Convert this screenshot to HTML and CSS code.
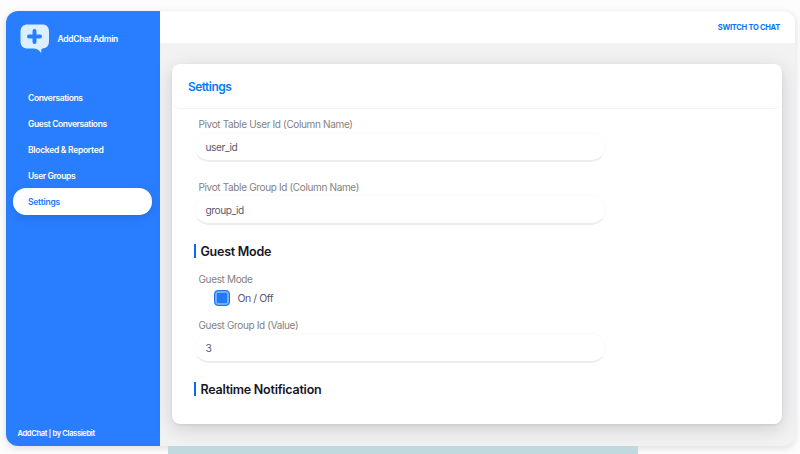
FILE: index.html
```html
<!DOCTYPE html>
<html lang="en">
<head>
<meta charset="utf-8">
<title>AddChat Admin</title>
<link rel="stylesheet" href="styles.css">
</head>
<body>
<div class="app">
  <aside class="sidebar">
    <div class="brand">
      <svg class="logo" width="30" height="30" viewBox="0 0 30 30">
        <path d="M8 .5h14c5 0 7 2.500 7 7.500v9c0 4-1.500 6-4 7-1.500.6-3.500.5-3.700 1.500l-.1 3.500c-1.500-2-3.700-4.500-7.200-4.500H8c-5 0-7.500-2.500-7.500-7.500V8C.5 3 3 .5 8 .5z" fill="#daefff"/>
        <path d="M14.500 7v11M9 12.500h11" stroke="#297eff" stroke-width="4" stroke-linecap="round"/>
      </svg>
      <span>AddChat Admin</span>
    </div>
    <nav class="nav">
      <a>Conversations</a>
      <a>Guest Conversations</a>
      <a>Blocked &amp; Reported</a>
      <a>User Groups</a>
      <a class="active">Settings</a>
    </nav>
    <footer class="credit">AddChat | by Classiebit</footer>
  </aside>
  <main class="main">
    <header class="topbar"><a>SWITCH TO CHAT</a></header>
    <section class="card">
      <h1 class="card-title">Settings</h1>
      <div class="card-body">
        <div class="field">
          <label>Pivot Table User Id (Column Name)</label>
          <div class="input">user_id</div>
        </div>
        <div class="field">
          <label>Pivot Table Group Id (Column Name)</label>
          <div class="input">group_id</div>
        </div>
        <h2>Guest Mode</h2>
        <div class="toggle">
          <label>Guest Mode</label>
          <div class="option"><span class="box"></span><span>On / Off</span></div>
        </div>
        <div class="field last">
          <label>Guest Group Id (Value)</label>
          <div class="input">3</div>
        </div>
        <h2>Realtime Notification</h2>
      </div>
    </section>
  </main>
</div>
<div class="strip"></div>
</body>
</html>
```
FILE: styles.css
```css
* { box-sizing: border-box; }
body {
  margin: 0;
  height: 454px;
  overflow: hidden;
  padding: 11px 5px 0 5.500px;
  background: #fdfdfd;
  font-family: Inter, "Liberation Sans", sans-serif;
}
.app {
  display: flex;
  height: 435px;
  border-radius: 12px;
  overflow: hidden;
  background: #f2f2f3;
  box-shadow: 0 2px 7px 1px rgba(0, 0, 0, .11);
}
.sidebar {
  width: 154px;
  flex: none;
  display: flex;
  flex-direction: column;
  background: #297eff;
  color: #fff;
  font-size: 8.500px;
  font-weight: 600;
}
.brand {
  display: flex;
  align-items: center;
  height: 34px;
  margin: 11px 0 0 14.500px;
  gap: 7.500px;
  letter-spacing: -.32px;
}
.logo { margin-top: -1px; }
.nav {
  margin: 28px 7.500px 0;
  display: flex;
  flex-direction: column;
}
.nav a {
  height: 26px;
  line-height: 28.500px;
  padding-left: 15px;
  border-radius: 13px;
  letter-spacing: -.38px;
}
.nav a:nth-child(3) { letter-spacing: -.28px; }
.nav .active {
  height: 27px;
  background: #fff;
  color: #1677ff;
  letter-spacing: -.22px;
  box-shadow: 0 3px 9px rgba(0, 40, 120, .18);
}
.credit {
  margin: auto 0 6px 12px;
  font-size: 7.500px;
  line-height: 12px;
  letter-spacing: -.33px;
}
.main { flex: 1; }
.topbar {
  height: 32px;
  padding: 0 15px 0 0;
  background: #fff;
  text-align: right;
  color: #0873f8;
  font-size: 7.500px;
  font-weight: 700;
  line-height: 33px;
  letter-spacing: -.27px;
}
.card {
  height: 360px;
  margin: 21px 13px 0 12.500px;
  border-radius: 8px;
  background: #fff;
  box-shadow: 0 5px 18px rgba(35, 35, 60, .17), 0 1px 3px rgba(0, 0, 0, .07);
}
.card-title {
  margin: 0;
  height: 44.500px;
  padding-left: 16px;
  border-bottom: 1px solid #f3f3f3;
  border-radius: 8px;
  color: #0d78fb;
  font-size: 12px;
  font-weight: 600;
  line-height: 45px;
  letter-spacing: -.55px;
}
.card-body { padding: 8.500px 0 0 21.500px; color: #5c5970; font-size: 10.500px; }
.field { width: 412px; height: 63px; }
label {
  display: block;
  height: 15px;
  padding-left: 5px;
  color: #828282;
  font-size: 10px;
  line-height: 15px;
  letter-spacing: -.35px;
}
.input {
  height: 30px;
  padding-left: 11px;
  border-radius: 15px;
  border: 1px solid #fafafa;
  border-bottom: 2px solid #ededed;
  line-height: 28px;
  font-size: 10.200px;
  letter-spacing: -.45px;
}
h2 {
  margin: 1px 0 0;
  height: 14px;
  padding-left: 5px;
  border-left: 2px solid #0d66ff;
  color: #17151f;
  font-size: 12.500px;
  font-weight: 600;
  line-height: 15px;
  letter-spacing: -.25px;
}
.toggle { margin-top: 14px; }
.option {
  display: flex;
  align-items: center;
  height: 22px;
  padding-left: 20px;
  gap: 8px;
  letter-spacing: -.45px;
}
.box {
  width: 16px;
  height: 16px;
  border: 1.500px solid #1877f5;
  border-radius: 4px;
  background: #1e7cf8;
  box-shadow: inset 0 0 0 2px #72adff;
}
.last { height: 63px; margin-top: 9px; }
.strip {
  width: 470px;
  height: 8px;
  margin-left: 162.500px;
  position: relative;
  background: #c0d9df;
}
```
